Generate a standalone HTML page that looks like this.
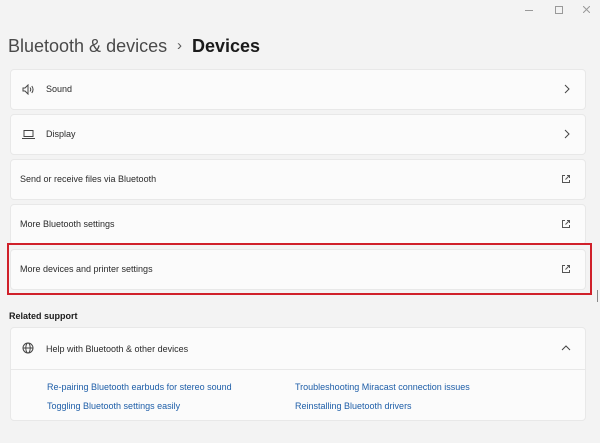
<!DOCTYPE html>
<html><head><style>
body{margin:0;width:600px;height:443px;background:#f3f3f3;font-family:"Liberation Sans",sans-serif;position:relative;overflow:hidden;color:#1b1b1b}
.t{position:absolute}
.card{position:absolute;left:10px;width:576px;height:41px;background:#fbfbfb;border:1px solid #e8e8e8;border-radius:4px;box-sizing:border-box;font-size:9px;color:#2a2a2a}
.card span{position:absolute;top:14px}
.ic{position:absolute;right:14px;top:14px}
a{color:#1e5ea8;text-decoration:none;font-size:9px;position:absolute}
</style></head><body>
<div class="t" style="left:525px;top:10px;width:8px;border-top:1px solid #999"></div>
<div class="t" style="left:555px;top:6px;width:6px;height:6px;border:1px solid #999"></div>
<svg class="t" style="left:583px;top:6px" width="7" height="7"><path d="M0 0l7 7M7 0L0 7" stroke="#999"/></svg>
<div class="t" style="left:8px;top:36px;font-size:18px;color:#4a4a4a">Bluetooth &amp; devices</div>
<div class="t" style="left:177px;top:37px;font-size:15px;color:#5a5a5a">›</div>
<div class="t" style="left:192px;top:36px;font-size:18px;font-weight:bold;color:#1b1b1b">Devices</div>

<div class="card" style="top:69px"><svg class="t" style="left:11px;top:14px" width="13" height="11" viewBox="0 0 13 11" fill="none" stroke="#444" stroke-width="1"><path d="M1 4h2l3-3v9l-3-3H1z"/><path d="M8 3.5q1.5 2 0 4M9.8 2q2.5 3.5 0 7"/></svg><span style="left:35px">Sound</span><svg class="ic" width="8" height="10"><path d="M2 1l4 4-4 4" fill="none" stroke="#444"/></svg></div>
<div class="card" style="top:114px"><svg class="t" style="left:11px;top:14px" width="13" height="11" fill="none" stroke="#444"><rect x="2" y="1.5" width="9" height="6"/><path d="M0 9.5h13"/></svg><span style="left:35px">Display</span><svg class="ic" width="8" height="10"><path d="M2 1l4 4-4 4" fill="none" stroke="#444"/></svg></div>
<div class="card" style="top:159px"><span style="left:9px">Send or receive files via Bluetooth</span><svg class="ic" width="10" height="10" fill="none" stroke="#555"><path d="M4 1.5H1.5v7h7V6M6 1.5h2.5V4M8.5 1.5L4.5 5.5"/></svg></div>
<div class="card" style="top:204px"><span style="left:9px">More Bluetooth settings</span><svg class="ic" width="10" height="10" fill="none" stroke="#555"><path d="M4 1.5H1.5v7h7V6M6 1.5h2.5V4M8.5 1.5L4.5 5.5"/></svg></div>
<div class="card" style="top:249px"><span style="left:9px">More devices and printer settings</span><svg class="ic" width="10" height="10" fill="none" stroke="#555"><path d="M4 1.5H1.5v7h7V6M6 1.5h2.5V4M8.5 1.5L4.5 5.5"/></svg></div>
<div class="t" style="left:7px;top:243px;width:581px;height:48px;border:2px solid #d0202a"></div>

<div class="t" style="left:9px;top:311px;font-size:9px;font-weight:bold">Related support</div>
<div class="card" style="top:327px;height:94px">
<svg class="t" style="left:11px;top:14px" width="12" height="12" fill="none" stroke="#444"><circle cx="6" cy="6" r="5"/><ellipse cx="6" cy="6" rx="2.2" ry="5"/><path d="M1 6h10"/></svg>
<span style="left:35px;top:16px">Help with Bluetooth &amp; other devices</span>
<svg class="ic" style="top:16px" width="10" height="8"><path d="M1 6l4-4 4 4" fill="none" stroke="#444"/></svg>
<div class="t" style="left:0;top:41px;width:574px;border-top:1px solid #e8e8e8"></div>
<a style="left:36px;top:54px">Re-pairing Bluetooth earbuds for stereo sound</a>
<a style="left:36px;top:73px">Toggling Bluetooth settings easily</a>
<a style="left:284px;top:54px">Troubleshooting Miracast connection issues</a>
<a style="left:284px;top:73px">Reinstalling Bluetooth drivers</a>
</div>
<div class="t" style="left:597px;top:290px;width:1px;height:12px;background:#888"></div>
</body></html>
